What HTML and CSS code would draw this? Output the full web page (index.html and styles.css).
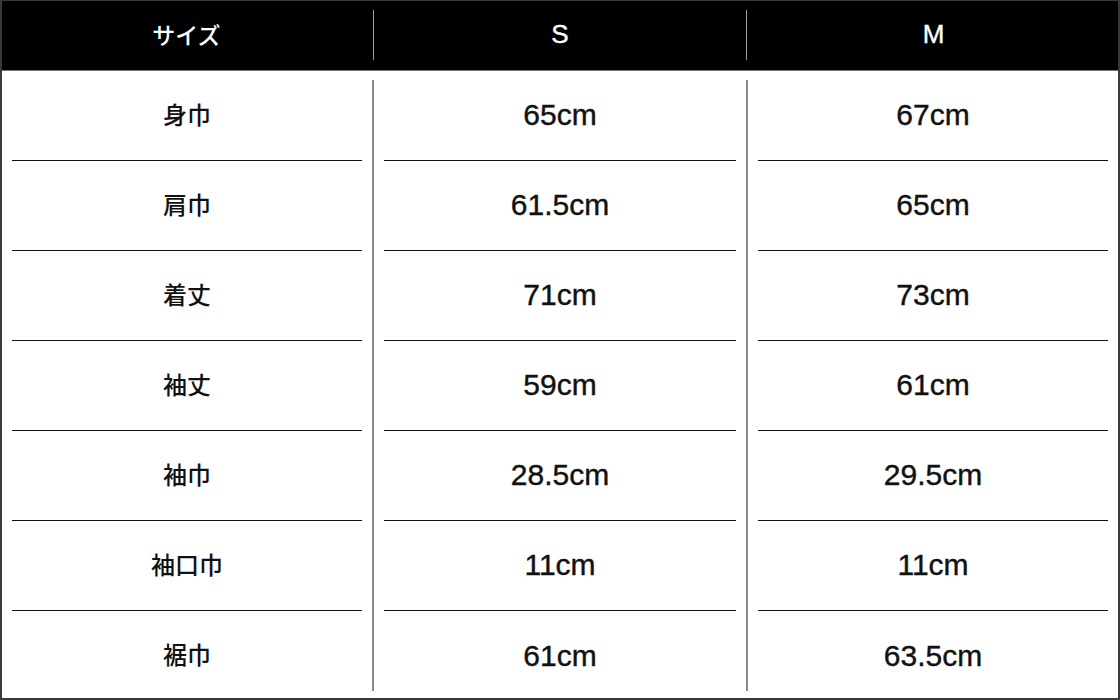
FILE: index.html
```html
<!DOCTYPE html>
<html lang="ja">
<head>
<meta charset="utf-8">
<link rel="stylesheet" href="styles.css">
</head>
<body>
<div class="frame">
  <div class="head">
    <div class="hcell">サイズ</div>
    <div class="hdiv"></div>
    <div class="hcell latin">S</div>
    <div class="hdiv"></div>
    <div class="hcell latin">M</div>
  </div>
  <div class="body">
    <div class="col">
      <div class="cell">身巾</div>
      <div class="cell">肩巾</div>
      <div class="cell">着丈</div>
      <div class="cell">袖丈</div>
      <div class="cell">袖巾</div>
      <div class="cell">袖口巾</div>
      <div class="cell">裾巾</div>
    </div>
    <div class="bdiv"></div>
    <div class="col">
      <div class="cell num">65cm</div>
      <div class="cell num">61.5cm</div>
      <div class="cell num">71cm</div>
      <div class="cell num">59cm</div>
      <div class="cell num">28.5cm</div>
      <div class="cell num">11cm</div>
      <div class="cell num">61cm</div>
    </div>
    <div class="bdiv"></div>
    <div class="col">
      <div class="cell num">67cm</div>
      <div class="cell num">65cm</div>
      <div class="cell num">73cm</div>
      <div class="cell num">61cm</div>
      <div class="cell num">29.5cm</div>
      <div class="cell num">11cm</div>
      <div class="cell num">63.5cm</div>
    </div>
  </div>
</div>
</body>
</html>
```
FILE: styles.css
```css
html, body {
  margin: 0;
  padding: 0;
  background: #fff;
}
body {
  font-family: "Noto Sans CJK JP", "Noto Sans", sans-serif;
  color: #111;
}
.frame {
  position: relative;
  width: 1120px;
  height: 700px;
  background: #fff;
}
.frame::after {
  content: "";
  position: absolute;
  inset: 0;
  border: 2px solid #3a3a3a;
  border-top-width: 1px;
  pointer-events: none;
}
.head {
  display: grid;
  grid-template-columns: 1fr 1px 1fr 1px 1fr;
  height: 71px;
  background: #000;
  border-bottom: 1px solid #777;
  box-sizing: border-box;
}
.hcell {
  display: flex;
  align-items: center;
  justify-content: center;
  color: #fff;
  font-size: 23px;
  font-weight: 500;
  padding-bottom: 2px;
}
.hcell.latin {
  font-family: "Liberation Sans", Arial, sans-serif;
  font-size: 26px;
  font-weight: 400;
  -webkit-text-stroke: 0.4px #fff;
}
.hdiv {
  background: #9a9a9a;
  margin: 10px 0;
}
.body {
  display: grid;
  grid-template-columns: 1fr 2px 1fr 2px 1fr;
}
.bdiv {
  background: #8a8a8a;
  margin: 9px 0 10px;
}
.col {
  display: flex;
  flex-direction: column;
  padding: 0 10px;
}
.col:first-child {
  padding-left: 12px;
}
.col:last-child {
  padding-right: 12px;
}
.cell {
  height: 90px;
  box-sizing: border-box;
  border-bottom: 1px solid #111;
  display: flex;
  align-items: center;
  justify-content: center;
  font-size: 24px;
  font-weight: 500;
  padding-bottom: 5px;
}
.cell:last-child {
  border-bottom: none;
}
.num {
  font-family: "Liberation Sans", Arial, sans-serif;
  font-size: 30px;
  font-weight: 400;
  padding-bottom: 1px;
  -webkit-text-stroke: 0.4px #111;
}
```
